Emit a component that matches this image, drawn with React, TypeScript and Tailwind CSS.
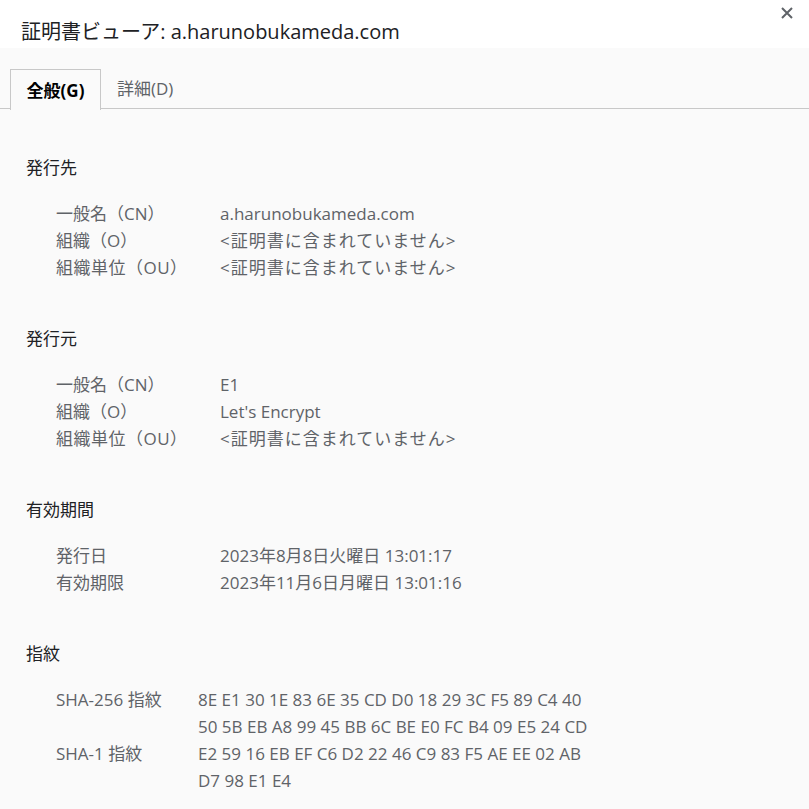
import React from "react";

const font = {
  fontFamily: '"Open Sans", "Noto Sans CJK JP", sans-serif',
};

function Row({ label, value, labelW }: { label: React.ReactNode; value: React.ReactNode; labelW: string }) {
  return (
    <div className="flex h-[27px] items-center">
      <div className={`${labelW} shrink-0`}>{label}</div>
      <div>{value}</div>
    </div>
  );
}

function Section({ title, children }: { title: string; children: React.ReactNode }) {
  return (
    <div>
      <div className="h-[27px] flex items-center text-[#202124]">{title}</div>
      <div className="pl-[30px] pt-[19px] text-[#5f6368]">{children}</div>
    </div>
  );
}

export default function App() {
  const none = <span className="tracking-[1px]">{"<証明書に含まれていません>"}</span>;
  const ou = <span className="tracking-[0.5px]">組織単位（OU）</span>;
  return (
    <div className="w-[809px] h-[809px] bg-[#fafafa] overflow-hidden text-[17px] leading-[27px]" style={font}>
      <div className="relative bg-white h-[48px] pl-[21px] pt-[17px]">
        <div className="text-[20px] leading-[29px] text-[#202124]">証明書ビューア: a.harunobukameda.com</div>
        <svg className="absolute right-[16px] top-[7px]" width="12" height="12" viewBox="0 0 12 12">
          <path d="M1 1L11 11M11 1L1 11" stroke="#5f6368" strokeWidth="2" />
        </svg>
      </div>
      <div className="pt-[21px]">
        <div className="flex h-[40px] border-b border-[#c8c8c8] pl-[10px]">
          <div className="w-[91px] h-[41px] -mb-px border border-b-0 border-[#c8c8c8] bg-[#fafafa] flex items-center justify-center font-bold text-[#000]">
            全般(G)
          </div>
          <div className="ml-[16px] flex items-center text-[#5f6368]">詳細(D)</div>
        </div>
      </div>
      <div className="pl-[26px] pt-[45px] flex flex-col gap-[44px]">
        <Section title="発行先">
          <Row labelW="w-[164px]" label="一般名（CN）" value="a.harunobukameda.com" />
          <Row labelW="w-[164px]" label="組織（O）" value={none} />
          <Row labelW="w-[164px]" label={ou} value={none} />
        </Section>
        <Section title="発行元">
          <Row labelW="w-[164px]" label="一般名（CN）" value="E1" />
          <Row labelW="w-[164px]" label="組織（O）" value="Let's Encrypt" />
          <Row labelW="w-[164px]" label={ou} value={none} />
        </Section>
        <Section title="有効期間">
          <Row labelW="w-[164px]" label="発行日" value="2023年8月8日火曜日 13:01:17" />
          <Row labelW="w-[164px]" label="有効期限" value="2023年11月6日月曜日 13:01:16" />
        </Section>
        <Section title="指紋">
          <div className="flex">
            <div className="w-[142px] shrink-0">SHA-256 指紋</div>
            <div>
              8E E1 30 1E 83 6E 35 CD D0 18 29 3C F5 89 C4 40
              <br />
              50 5B EB A8 99 45 BB 6C BE E0 FC B4 09 E5 24 CD
            </div>
          </div>
          <div className="flex">
            <div className="w-[142px] shrink-0">SHA-1 指紋</div>
            <div>
              E2 59 16 EB EF C6 D2 22 46 C9 83 F5 AE EE 02 AB
              <br />
              D7 98 E1 E4
            </div>
          </div>
        </Section>
      </div>
    </div>
  );
}
